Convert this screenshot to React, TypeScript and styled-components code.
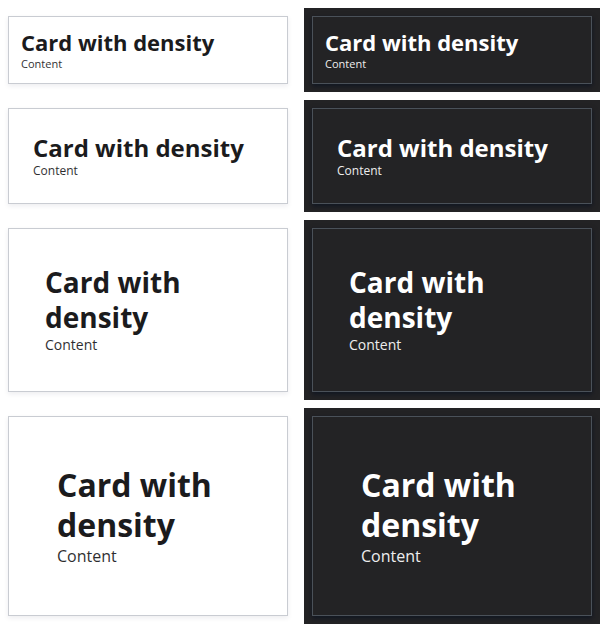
import React from "react";
import styled, { createGlobalStyle } from "styled-components";

const Global = createGlobalStyle`
  html, body { margin: 0; padding: 0; background: #ffffff; }
  body { font-family: "Open Sans", "Noto Sans", sans-serif; }
`;

type Density = { pad: number; title: number; titleLh: number; text: number; textLh: number };

const densities: Density[] = [
  { pad: 12, title: 22, titleLh: 27, text: 11, textLh: 15 },
  { pad: 24, title: 24, titleLh: 30, text: 12, textLh: 16 },
  { pad: 36, title: 28, titleLh: 35, text: 14, textLh: 20 },
  { pad: 48, title: 32, titleLh: 40, text: 16, textLh: 22 },
];

const Page = styled.div`
  display: flex;
  flex-direction: column;
  gap: 8px;
  padding: 8px 0;
`;

const Row = styled.div`
  display: grid;
  grid-template-columns: 296px 296px;
  column-gap: 8px;
`;

const Panel = styled.div<{ $dark?: boolean }>`
  padding: 8px;
  background: ${(p) => (p.$dark ? "#232325" : "#ffffff")};
`;

const Card = styled.div<{ $dark?: boolean; $pad: number }>`
  padding: ${(p) => p.$pad}px;
  border: 1px solid ${(p) => (p.$dark ? "#4a5159" : "#c9ccd2")};
  background: ${(p) => (p.$dark ? "#232325" : "#ffffff")};
  box-shadow: ${(p) =>
    p.$dark ? "0 2px 5px rgba(2, 12, 32, 0.6)" : "0 2px 5px rgba(20, 30, 60, 0.08)"};
  color: ${(p) => (p.$dark ? "#ffffff" : "#1b1b1d")};
`;

const Title = styled.h2<{ $size: number; $lh: number }>`
  margin: 0;
  font-weight: 700;
  font-size: ${(p) => p.$size}px;
  line-height: ${(p) => p.$lh}px;
`;

const Text = styled.p<{ $size: number; $lh: number }>`
  margin: 0;
  font-size: ${(p) => p.$size}px;
  line-height: ${(p) => p.$lh}px;
  opacity: 0.92;
`;

const DensityCard = ({ d, dark }: { d: Density; dark?: boolean }) => (
  <Card $dark={dark} $pad={d.pad}>
    <Title $size={d.title} $lh={d.titleLh}>Card with density</Title>
    <Text $size={d.text} $lh={d.textLh}>Content</Text>
  </Card>
);

export default function App() {
  return (
    <>
      <Global />
      <Page>
        {densities.map((d, i) => (
          <Row key={i}>
            <Panel>
              <DensityCard d={d} />
            </Panel>
            <Panel $dark>
              <DensityCard d={d} dark />
            </Panel>
          </Row>
        ))}
      </Page>
    </>
  );
}
